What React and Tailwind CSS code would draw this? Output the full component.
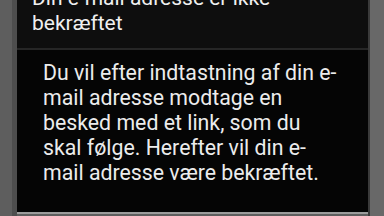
export default function App() {
  const body = [
    'Du vil efter indtastning af din e-',
    'mail adresse modtage en',
    'besked med et link, som du',
    'skal følge. Herefter vil din e-',
    'mail adresse være bekræftet.',
  ]

  return (
    <div className="w-[384px] h-[216px] overflow-hidden bg-[#5e5e5e] grid grid-cols-[12px_5px_351px_2px_14px] font-['Roboto',sans-serif]">
      <div />
      <div className="bg-[#4e4e4e]" />

      {/* Dialog */}
      <div className="flex flex-col overflow-hidden">
        <div className="h-[212px] flex flex-col bg-black">
          {/* Title */}
          <div className="h-[48px] shrink-0 bg-[#0e0e0e] flex flex-col justify-end pl-[15px] pb-[12px]">
            <div className="text-[21px] leading-[25px] text-[#f0f0f0] whitespace-nowrap">Din e-mail adresse er ikke</div>
            <div className="text-[21px] leading-[25px] text-[#f0f0f0] whitespace-nowrap">bekræftet</div>
          </div>
          <div className="h-[2px] shrink-0 bg-[#262626]" />

          {/* Message */}
          <div className="flex-1 bg-[#050505] pl-[26px] pt-[10px]">
            {body.map((line) => (
              <div key={line} className="text-[21.3px] leading-[25px] text-[#ececec] whitespace-nowrap">
                {line}
              </div>
            ))}
          </div>
        </div>
        <div className="h-[2px] bg-[#9c9c9c]" />
      </div>

      <div className="bg-[#3a3a3a]" />
      <div className="bg-[#686868]" />
    </div>
  )
}
